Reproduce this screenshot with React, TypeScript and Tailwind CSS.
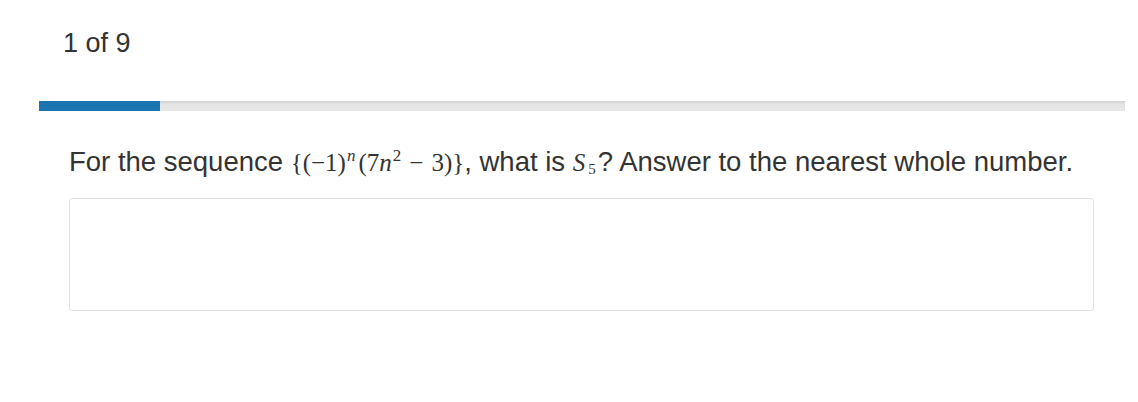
import React from 'react'

// Question card: counter, progress track, prompt with inline math, answer box.
const TOTAL = 9
const CURRENT = 1

function MathSeq() {
  return (
    <span className="whitespace-nowrap font-['Liberation_Serif',serif] text-[25px] leading-none text-[#333]">
      {'{('}−1{')'}
      <span className="relative -top-[10px] ml-[1px] text-[17px] italic">n</span>
      <span className="ml-[3px]">(7</span>
      <span className="italic">n</span>
      <span className="relative -top-[10px] ml-[1px] text-[17px]">2</span>
      <span className="mx-[8px]">−</span>3{')}'}
    </span>
  )
}

function MathS5() {
  return (
    <span className="whitespace-nowrap font-['Liberation_Serif',serif] text-[25px] italic leading-none text-[#333]">
      S
      <span className="relative top-[3px] ml-[3px] mr-[2px] text-[15px] not-italic">5</span>
    </span>
  )
}

export default function App() {
  const pct = (CURRENT / TOTAL) * 100
  return (
    <div className="h-[402px] w-[1138px] bg-white font-['Liberation_Sans',Arial,sans-serif] text-[#333]">
      <div className="pl-[39px] pr-[13px]">
        <div className="pl-[24px] pt-[28px] text-[27px] leading-[31px]">
          {CURRENT} of {TOTAL}
        </div>

        <div className="mt-[42px] h-[10px] w-full overflow-hidden bg-[#e6e6e6] shadow-[inset_0_2px_2px_rgba(0,0,0,0.08)]">
          <div className="h-full bg-[#1a75b0]" style={{ width: `${pct}%` }} />
        </div>

        <div className="pl-[30px] pr-[31px]">
          <p className="mt-[35px] text-[27.5px] leading-[31px]">
            For the sequence <MathSeq />, what is <MathS5 />? Answer to the nearest whole number.
          </p>
          <div className="mt-[21px] h-[113px] w-full rounded-[3px] border border-[#e3e3e3] bg-white" />
        </div>
      </div>
    </div>
  )
}
